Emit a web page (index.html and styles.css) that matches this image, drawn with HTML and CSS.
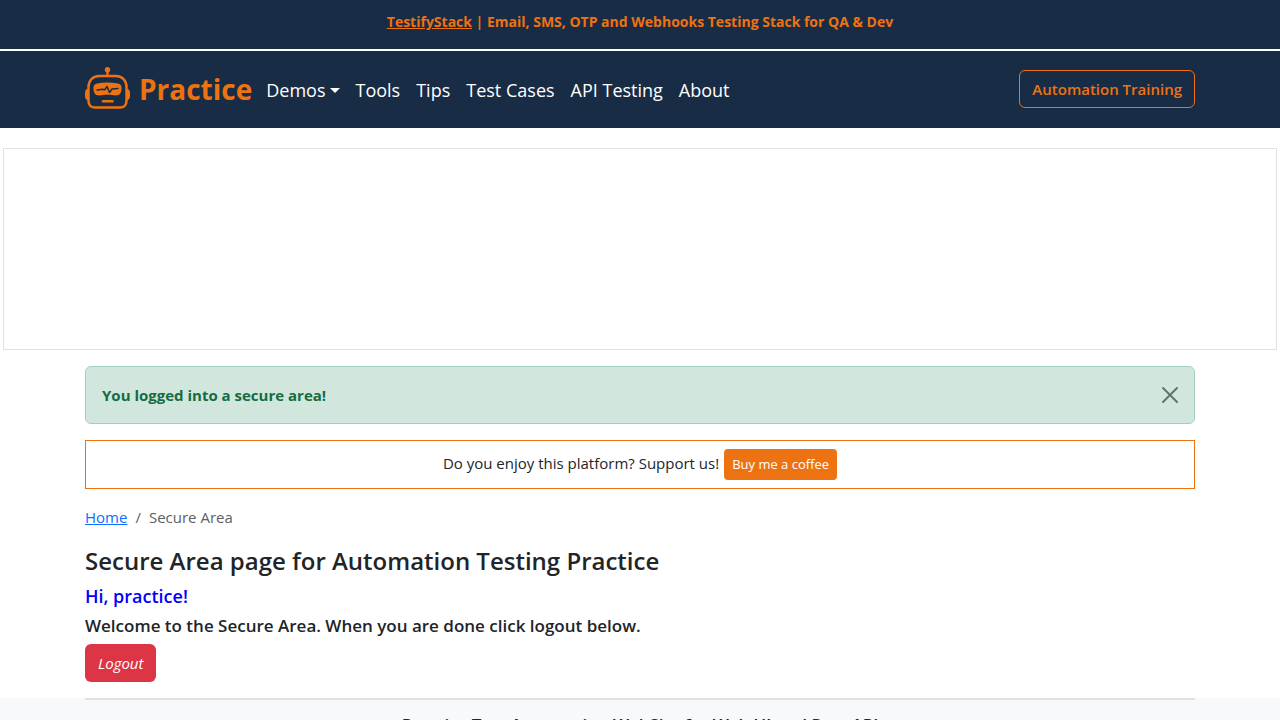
FILE: index.html
```html
<!DOCTYPE html>
<html lang="en">
<head>
<meta charset="utf-8">
<meta name="viewport" content="width=device-width, initial-scale=1">
<title>Secure Area page for Automation Testing Practice</title>
<link rel="stylesheet" href="styles.css">
</head>
<body>
<div class="promo"><a href="#">TestifyStack</a> | Email, SMS, OTP and Webhooks Testing Stack for QA &amp; Dev</div>
<header class="header">
  <nav class="container navbar">
    <a class="brand" href="#">
      <svg class="brand-logo" viewBox="0 1 45 45" fill="none" stroke="#ed7211" aria-hidden="true">
        <circle cx="22.500" cy="3.700" r="2.700" fill="#ed7211" stroke="none"/>
        <path d="M22.500 5v5" stroke-width="2.400"/>
        <path d="M14 10h17c6.500 0 10.500 5 10.500 11v14c0 4-2.500 6.500-6.500 6.500H10c-4 0-6.500-2.500-6.500-6.500V21c0-6 4-11 10.500-11z" stroke-width="2.500"/>
        <path d="M3.500 22.500C1 23 0 24.500 0 27v3c0 2.500 1 4 3.500 4.500zM41.500 22.500C44 23 45 24.500 45 27v3c0 2.500-1 4-3.500 4.500z" fill="#ed7211" stroke="none"/>
        <path d="M12 17.500c7-1.500 14-1.500 21 0 3 .6 4 3 3.500 6-.4 3.500-1.500 5.500-4 5.800-3.500.4-6-.6-10-.6s-6.500 1-10 .6c-2.500-.3-3.600-2.300-4-5.800-.5-3 .5-5.400 3.500-6z" fill="#ed7211" stroke="none"/>
        <path d="M12 24l5.500-.8 2.500.5 2-3.200 2.500 6 2.500-3.500 6-.6" stroke="#192c45" stroke-width="1.500" stroke-linejoin="round" stroke-linecap="round"/>
        <path d="M18 35.200h9.500" stroke-width="2.400" stroke-linecap="round"/>
      </svg>
      <span>Practice</span>
    </a>
    <ul class="menu">
      <li><button class="menu-toggle" type="button">Demos</button></li>
      <li><a href="#">Tools</a></li>
      <li><a href="#">Tips</a></li>
      <li><a href="#">Test Cases</a></li>
      <li><a href="#">API Testing</a></li>
      <li><a href="#">About</a></li>
    </ul>
    <a class="training" href="#">Automation Training</a>
  </nav>
</header>
<div class="ad-slot"></div>
<main class="container">
  <div class="alert" role="alert">
    <b>You logged into a secure area!</b>
    <button class="close" type="button" aria-label="Close">
      <svg viewBox="0 0 16 16" aria-hidden="true"><path d="M1 1l14 14M15 1L1 15" stroke="#000" stroke-width="2" stroke-linecap="round"/></svg>
    </button>
  </div>
  <div class="support"><span>Do you enjoy this platform? Support us!</span><a class="coffee" href="#">Buy me a coffee</a></div>
  <nav aria-label="breadcrumb">
    <ol class="breadcrumb">
      <li><a href="#">Home</a></li>
      <li aria-current="page">Secure Area</li>
    </ol>
  </nav>
  <h1 class="title">Secure Area page for Automation Testing Practice</h1>
  <h3 class="greeting">Hi, practice!</h3>
  <h4 class="welcome">Welcome to the Secure Area. When you are done click logout below.</h4>
  <a class="logout" href="#"><i>Logout</i></a>
</main>
<footer class="footer">
  <div class="container">
    <h5 class="footer-title">Practice Test Automation WebSite for Web UI and Rest API</h5>
  </div>
</footer>
</body>
</html>
```
FILE: styles.css
```css
* { box-sizing: border-box; }

body {
  margin: 0;
  background: #fff;
  color: #212529;
  font-family: "Segoe UI", "Open Sans", "Noto Sans", sans-serif;
  font-size: 15px;
  line-height: 24px;
}

.container {
  width: 100%;
  max-width: 1140px;
  margin: 0 auto;
  padding: 0 15px;
}

.promo {
  padding: 10px 16px 15px;
  border-bottom: 2px solid #fff;
  background: #192c45;
  color: #ed7211;
  font-size: 14px;
  font-weight: 700;
  text-align: center;
}
.promo a { color: inherit; }

.header { background: #192c45; }
.navbar {
  display: flex;
  align-items: center;
  min-height: 77px;
  padding-bottom: 1px;
}
.brand {
  display: flex;
  align-items: center;
  gap: 9px;
  margin-right: 14px;
  color: #ed7211;
  font-size: 28px;
  font-weight: 700;
  line-height: 45px;
  text-decoration: none;
}
.brand-logo { width: 45px; height: 45px; }
.menu {
  display: flex;
  gap: 16px;
  margin: 0;
  padding: 2px 0 0;
  list-style: none;
  font-size: 18px;
}
.menu a,
.menu-toggle {
  color: #fff;
  text-decoration: none;
}
.menu-toggle {
  display: flex;
  align-items: center;
  gap: 4px;
  padding: 0;
  border: 0;
  background: none;
  font: inherit;
}
.menu-toggle::after {
  content: "";
  border: 5px solid transparent;
  border-top-color: #fff;
  border-bottom: 0;
}
.training {
  margin-left: auto;
  padding: 6px 12px;
  border: 1px solid #ed7211;
  border-radius: 6px;
  color: #ed7211;
  font-weight: 600;
  text-decoration: none;
}

.ad-slot {
  height: 202px;
  margin: 20px 3px 16px;
  border: 1px solid #dee2e6;
}

.alert {
  display: flex;
  align-items: center;
  justify-content: space-between;
  margin-bottom: 16px;
  padding: 16px;
  border: 1px solid #a3cfbb;
  border-radius: 6px;
  background: #d1e7dd;
  color: #146c43;
}
.close {
  display: flex;
  padding: 0;
  border: 0;
  background: none;
  opacity: 0.5;
}
.close svg { width: 16px; height: 16px; overflow: visible; }

.support {
  display: flex;
  justify-content: center;
  gap: 5px;
  margin-bottom: 16px;
  padding: 8px;
  border: 1px solid #ed7211;
}
.support span { padding-top: 2px; }
.coffee {
  padding: 5px 8px;
  border-radius: 4px;
  background: #ed7211;
  color: #fff;
  font-size: 13px;
  line-height: 21px;
  text-decoration: none;
}

.breadcrumb {
  display: flex;
  margin: 0 0 16px;
  padding: 0;
  list-style: none;
  color: #5c6166;
}
.breadcrumb a { color: #0d6efd; }
.breadcrumb li + li::before {
  content: "/";
  padding: 0 8px;
}

.title,
.greeting,
.welcome {
  margin: 0;
  font-weight: 600;
}
.title { margin-bottom: 8px; font-size: 24px; line-height: 31px; }
.greeting { margin-bottom: 6px; color: #00f; font-size: 18px; line-height: 24px; }
.welcome { margin-bottom: 7px; font-size: 17px; line-height: 23px; }
.logout {
  display: inline-block;
  margin-bottom: 16px;
  padding: 7px 13px;
  border-radius: 6px;
  background: #dc3545;
  color: #fff;
  text-decoration: none;
}

.footer { background: #f8f9fa; }
.footer-title {
  margin: 0;
  padding: 14px 0;
  border-top: 2px solid #dee2e6;
  font-size: 17px;
  font-weight: 600;
  line-height: 22px;
  text-align: center;
}
```
